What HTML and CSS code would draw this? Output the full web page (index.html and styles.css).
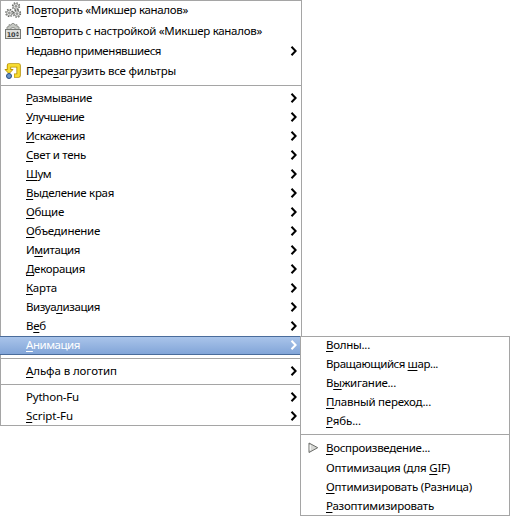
FILE: index.html
```html
<!DOCTYPE html>
<html lang="ru">
<head>
<meta charset="utf-8">
<title>Фильтры</title>
<link rel="stylesheet" href="styles.css">
</head>
<body>
<svg width="0" height="0" class="defs">
  <symbol id="arrow" viewBox="0 0 8 12"><path d="M1.5 1.7 5.6 6 1.5 10.3" fill="none" stroke="currentColor" stroke-width="2"/></symbol>
  <symbol id="gear" viewBox="-5 -5 10 10"><circle r="4.1" fill="none" stroke="#6b6d69" stroke-width="1.5" stroke-dasharray="1.7 1.52"/><circle r="3.1" fill="#f2f2f2" stroke="#777974" stroke-width=".9"/><circle r="1" fill="#fff" stroke="#555753" stroke-width=".9"/></symbol>
</svg>
<div class="menu main">
  <div class="item r1"><svg class="icon" viewBox="0 0 16 16"><use href="#gear" x="6.6" y="0" width="8.8" height="8.8"/><use href="#gear" x="0" y="6.6" width="8.8" height="8.8"/><use href="#gear" x="7.6" y="7.2" width="8.8" height="8.8"/></svg><span data-w="162">По<u>в</u>торить «Микшер каналов»</span></div>
  <div class="item r2"><svg class="icon" viewBox="0 0 16 16"><path d="M2 7V4l2-.5V1.6l2 .6L7 .5h2l1 1.7 2-.6v1.9l2 .5v3z" fill="#c6c8c3" stroke="#92948f"/><path d="M5.5 6.5a2.5 2 0 0 1 5 0" fill="#eee" stroke="#92948f"/><rect x=".5" y="6.5" width="15" height="9" fill="#dedfdc" stroke="#777974"/><text class="digits" x="1.8" y="13.6">10</text><path d="M10.8 10.6 12.5 8.6 14.2 10.6zM10.8 11.8 12.5 13.8 14.2 11.8z" fill="#3c3e3b"/></svg><span data-w="236">П<u>о</u>вторить с настройкой «Микшер каналов»</span></div>
  <div class="item r3"><span data-w="135">Недавно применявшиеся</span><svg class="arrow"><use href="#arrow"/></svg></div>
  <div class="item r4"><svg class="icon" viewBox="0 0 16 16"><path d="M4 7V2.4h9.6v10.2H9" fill="none" stroke="#b89200" stroke-width="4.4" stroke-linejoin="round"/><path d="M0 6.5h8L4 10.6z" fill="#f5dc35" stroke="#b89200"/><path d="M4 7.5V2.4h9.6v10.2H9.6" fill="none" stroke="#f7dc32" stroke-width="2.6" stroke-linejoin="round"/><circle cx="4" cy="13" r="2.5" fill="#6a94c8" stroke="#294f82"/></svg><span data-w="150">Пере<u>з</u>агрузить все фильтры</span></div>
  <div class="sep"></div>
  <div class="item"><span data-w="66"><u>Р</u>азмывание</span><svg class="arrow"><use href="#arrow"/></svg></div>
  <div class="item"><span data-w="58"><u>У</u>лучшение</span><svg class="arrow"><use href="#arrow"/></svg></div>
  <div class="item"><span data-w="59"><u>И</u>скажения</span><svg class="arrow"><use href="#arrow"/></svg></div>
  <div class="item"><span data-w="60"><u>С</u>вет и тень</span><svg class="arrow"><use href="#arrow"/></svg></div>
  <div class="item"><span data-w="25"><u>Ш</u>ум</span><svg class="arrow"><use href="#arrow"/></svg></div>
  <div class="item"><span data-w="88"><u>В</u>ыделение края</span><svg class="arrow"><use href="#arrow"/></svg></div>
  <div class="item"><span data-w="38"><u>О</u>бщие</span><svg class="arrow"><use href="#arrow"/></svg></div>
  <div class="item"><span data-w="74"><u>О</u>бъединение</span><svg class="arrow"><use href="#arrow"/></svg></div>
  <div class="item"><span data-w="54">И<u>м</u>итация</span><svg class="arrow"><use href="#arrow"/></svg></div>
  <div class="item"><span data-w="59"><u>Д</u>екорация</span><svg class="arrow"><use href="#arrow"/></svg></div>
  <div class="item"><span data-w="31"><u>К</u>арта</span><svg class="arrow"><use href="#arrow"/></svg></div>
  <div class="item"><span data-w="74">Визуа<u>л</u>изация</span><svg class="arrow"><use href="#arrow"/></svg></div>
  <div class="item"><span data-w="20">В<u>е</u>б</span><svg class="arrow"><use href="#arrow"/></svg></div>
  <div class="item active"><span data-w="54"><u>А</u>нимация</span><svg class="arrow"><use href="#arrow"/></svg></div>
  <div class="sep"></div>
  <div class="item"><span data-w="91"><u>А</u>льфа в логотип</span><svg class="arrow"><use href="#arrow"/></svg></div>
  <div class="sep"></div>
  <div class="item"><span data-w="53">Python-Fu</span><svg class="arrow"><use href="#arrow"/></svg></div>
  <div class="item last"><span data-w="47"><u>S</u>cript-Fu</span><svg class="arrow"><use href="#arrow"/></svg></div>
</div>
<div class="menu sub">
  <div class="item first"><span data-w="44"><u>В</u>олны...</span></div>
  <div class="item"><span data-w="112">Вращающийся <u>ш</u>ар...</span></div>
  <div class="item"><span data-w="70">В<u>ы</u>жигание...</span></div>
  <div class="item"><span data-w="105"><u>П</u>лавный переход...</span></div>
  <div class="item"><span data-w="35"><u>Р</u>ябь...</span></div>
  <div class="sep"></div>
  <div class="item play"><svg class="icon" viewBox="0 0 16 16"><path d="M4 3 12.7 7.7 4 12.5z" fill="#d6d7d4" stroke="#6b6d69"/><path d="M5.2 5v5.4" stroke="#fff"/></svg><span data-w="104"><u>В</u>оспроизведение...</span></div>
  <div class="item low"><span data-w="124">Оптимизация (для <u>G</u>IF)</span></div>
  <div class="item low"><span data-w="146"><u>О</u>птимизировать (Разница)</span></div>
  <div class="item low last"><span data-w="108"><u>Р</u>азоптимизировать</span></div>
</div>
<script src="fit.js"></script>
</body>
</html>
```
FILE: styles.css
```css
* { box-sizing: border-box; }
body { margin: 0; background: #fff; width: 510px; height: 516px; overflow: hidden; position: relative; font: 11.5px/17px "Noto Sans", "Open Sans", sans-serif; color: #000; }
.defs { position: absolute; }
.menu { background: #fff; border: 1px solid #a5a5a5; }
.main { width: 302px; height: 426px; }
.sub { position: absolute; left: 300px; top: 336px; width: 210px; height: 180px; }
.item { height: 19px; display: flex; align-items: center; position: relative; padding: 0 0 2px 25px; white-space: nowrap; }
.item u { text-decoration: underline; text-decoration-thickness: 1px; text-underline-offset: 2px; text-decoration-skip-ink: none; }
.r1 { height: 19px; }
.r2 { height: 22px; }
.r3 { height: 19px; }
.r4 { height: 21px; }
.sep { height: 7px; padding-top: 3px; }
.sep::before { content: ""; display: block; height: 1px; background: #a5a5a5; }
.icon { position: absolute; left: 4px; top: 2px; width: 16px; height: 16px; overflow: visible; }
.r1 .icon { top: 1px; }
.r2 .icon { top: 3px; }
.digits { font: bold 6.5px "DejaVu Sans", sans-serif; fill: #3c3e3b; letter-spacing: -.3px; }
.arrow { width: 8px; height: 12px; margin-left: auto; margin-right: 3px; }
.active { margin: 0 0 0 -1px; padding: 0 0 2px 26px; color: #fff; background: linear-gradient(#a9c4ea, #82a5d8); border-top: 1px solid #4a6c9b; border-bottom: 1px solid #4a6c9b; }
.first, .last { height: 18px; }
.first { padding-bottom: 3px; }
.last { padding-bottom: 1px; }
.low { padding-bottom: 0; }
.play { height: 20px; }
```
FILE: fit.js
```js
document.querySelectorAll("[data-w]").forEach(function (el) {
  var gap = (Number(el.dataset.w) - el.getBoundingClientRect().width) / el.textContent.length;
  el.style.letterSpacing = gap.toFixed(3) + "px";
});
```
